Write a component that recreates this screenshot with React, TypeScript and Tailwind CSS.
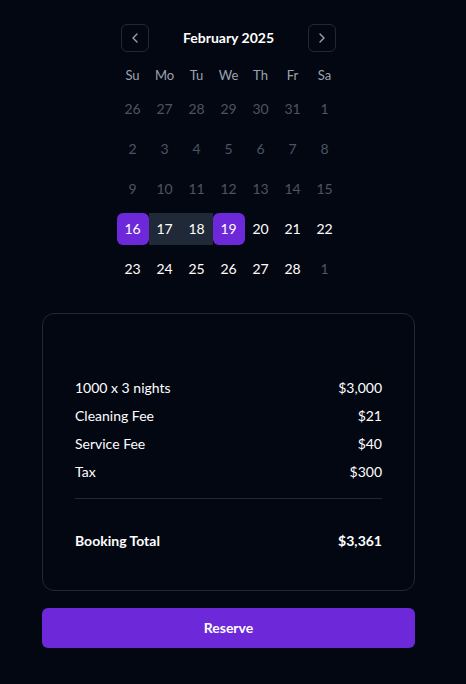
import React from 'react';
import {ChevronLeft, ChevronRight} from 'lucide-react';

type Day = {n: number; muted?: boolean; kind?: 'start' | 'mid' | 'end'};

const weeks: Day[][] = [
  [26, 27, 28, 29, 30, 31, 1].map((n) => ({n, muted: true})),
  [2, 3, 4, 5, 6, 7, 8].map((n) => ({n, muted: true})),
  [9, 10, 11, 12, 13, 14, 15].map((n) => ({n, muted: true})),
  [
    {n: 16, kind: 'start'},
    {n: 17, kind: 'mid'},
    {n: 18, kind: 'mid'},
    {n: 19, kind: 'end'},
    {n: 20},
    {n: 21},
    {n: 22},
  ],
  [{n: 23}, {n: 24}, {n: 25}, {n: 26}, {n: 27}, {n: 28}, {n: 1, muted: true}],
];

const lines = [
  ['1000 x 3 nights', '$3,000'],
  ['Cleaning Fee', '$21'],
  ['Service Fee', '$40'],
  ['Tax', '$300'],
];

function DayCell({day}: {day: Day}) {
  let cls = 'text-white';
  if (day.muted) cls = 'text-[#4b5563]';
  if (day.kind === 'start') cls = 'bg-[#6d28d9] text-white rounded-md';
  if (day.kind === 'end') cls = 'bg-[#6d28d9] text-white rounded-md';
  if (day.kind === 'mid') cls = 'bg-[#1f2937] text-white';
  return (
    <div className={`w-8 h-8 flex items-center justify-center text-sm ${cls}`}>
      {day.n}
    </div>
  );
}

export default function App() {
  return (
    <div
      className="min-h-[684px] w-full bg-[#030712] pl-[42px] pr-[51px] pt-6"
      style={{fontFamily: 'Lato, sans-serif'}}
    >
      {/* Calendar */}
      <div className="flex justify-center">
        <div className="w-[224px]">
          <div className="flex items-center justify-between px-1 h-7">
            <button className="w-7 h-7 rounded-md border border-[#1f2937] flex items-center justify-center text-[#9ca3af]">
              <ChevronLeft className="w-4 h-4" />
            </button>
            <span className="text-sm font-bold text-white">February 2025</span>
            <button className="w-7 h-7 rounded-md border border-[#1f2937] flex items-center justify-center text-[#9ca3af]">
              <ChevronRight className="w-4 h-4" />
            </button>
          </div>
          <div className="grid grid-cols-7 mt-[14px] mb-[7px]">
            {['Su', 'Mo', 'Tu', 'We', 'Th', 'Fr', 'Sa'].map((d) => (
              <div key={d} className="w-8 text-center text-[13px] text-[#9ca3af]">
                {d}
              </div>
            ))}
          </div>
          <div className="flex flex-col gap-2">
            {weeks.map((w, i) => (
              <div key={i} className="flex">
                {w.map((d, j) => (
                  <DayCell key={j} day={d} />
                ))}
              </div>
            ))}
          </div>
        </div>
      </div>

      {/* Price summary */}
      <div className="mt-7 rounded-xl border border-[#1f2937] px-8 pt-[64px] pb-[39px]">
        <div className="flex flex-col gap-2">
          {lines.map(([label, value]) => (
            <div key={label} className="flex justify-between text-sm text-white h-5 items-center">
              <span>{label}</span>
              <span>{value}</span>
            </div>
          ))}
        </div>
        <div className="mt-4 border-t border-[#1f2937]" />
        <div className="mt-[32px] flex justify-between text-sm font-bold text-white">
          <span>Booking Total</span>
          <span>$3,361</span>
        </div>
      </div>

      <button className="mt-[17px] w-full h-10 rounded-md bg-[#6d28d9] text-white text-sm font-bold">
        Reserve
      </button>
    </div>
  );
}
